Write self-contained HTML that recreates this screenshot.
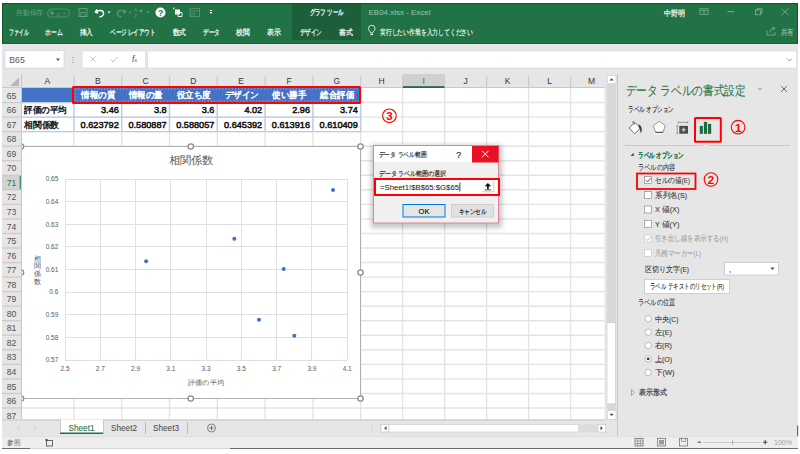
<!DOCTYPE html><html lang="ja"><head><meta charset="utf-8"><style>
html,body{margin:0;padding:0;background:#fff;width:800px;height:454px;overflow:hidden}
svg{display:block;font-family:"Liberation Sans", sans-serif}
</style></head><body>
<svg width="800" height="454" viewBox="0 0 800 454">
<rect x="2" y="3" width="796" height="445" fill="#e6e6e6"/>
<rect x="2" y="3" width="796" height="41" fill="#217346"/>
<rect x="2" y="3" width="796" height="1" fill="#0e5a2c"/>
<rect x="2" y="43" width="796" height="1" fill="#12683a"/>
<rect x="2" y="3" width="1" height="41" fill="#0e5a2c"/>
<rect x="797" y="3" width="1" height="41" fill="#0e5a2c"/>
<rect x="292" y="4" width="69" height="36" fill="#1d5f3a"/>
<text x="16" y="14.8" font-size="7" fill="#6aa583" text-anchor="start" font-weight="normal" textLength="27" lengthAdjust="spacingAndGlyphs" >自動保存</text>
<rect x="47.5" y="9" width="22" height="8" rx="4" fill="none" stroke="#5f9a77" stroke-width="0.8"/>
<circle cx="52" cy="13" r="1.8" fill="#5f9a77"/>
<text x="56" y="15.5" font-size="5" fill="#5f9a77" text-anchor="start" font-weight="normal" textLength="10" lengthAdjust="spacingAndGlyphs" >オフ</text>
<rect x="79" y="8.5" width="8" height="8" fill="none" stroke="#6aa07f" stroke-width="0.9"/>
<rect x="81" y="12.5" width="4" height="4" fill="none" stroke="#6aa07f" stroke-width="0.8"/>
<path d="M97 9.5 L95.5 12 L98 13.2 M95.8 12 C99 9.5 104 10 103.5 14 C103.2 16 101 17 99.5 16.5" fill="none" stroke="#fff" stroke-width="1.5"/>
<path d="M107.5 11.5 h3 l-1.5 2z" fill="#fff"/>
<path d="M124 9.5 L125.5 12 L123 13.2 M125.2 12 C122 9.5 117 10 117.5 14 C117.8 16 120 17 121.5 16.5" fill="none" stroke="#5f9a77" stroke-width="1.2"/>
<path d="M129 11.5 h3 l-1.5 2z" fill="#5f9a77"/>
<text x="134" y="12" font-size="5" fill="#5f9a77" text-anchor="start" font-weight="normal" >A</text>
<text x="134" y="17.5" font-size="5" fill="#5f9a77" text-anchor="start" font-weight="normal" >Z</text>
<path d="M139 10 h4 l-2 3z M139 12.5 v0" fill="#5f9a77"/>
<path d="M146.5 11.5 h3 l-1.5 2z" fill="#5f9a77"/>
<circle cx="160.5" cy="12.5" r="5" fill="#fff"/>
<text x="160.5" y="15.8" font-size="8.5" fill="#217346" text-anchor="middle" font-weight="bold" >?</text>
<path d="M173.5 9.5 v-1.5 h1.5" fill="none" stroke="#fff" stroke-width="0.7"/>
<rect x="175" y="9.5" width="5" height="5" fill="#fff"/>
<path d="M179.5 12.5 h2.5 v4 h-4 v-2" fill="none" stroke="#fff" stroke-width="0.9"/>
<rect x="190" y="8.5" width="9.5" height="8" fill="none" stroke="#5f9a77" stroke-width="0.8"/>
<path d="M190 10.8 h9.5 M190 13 h4 M190 15 h4 M194.5 10.8 v5.7" stroke="#5f9a77" stroke-width="0.6"/>
<rect x="210" y="10" width="2" height="1" fill="#fff"/>
<path d="M209.5 12 h3 l-1.5 2z" fill="#fff"/>
<text x="326.5" y="15" font-size="7.5" fill="#ffffff" text-anchor="middle" font-weight="normal" textLength="34" lengthAdjust="spacingAndGlyphs" stroke="#ffffff" stroke-width="0.3" >グラフ ツール</text>
<text x="368.5" y="15" font-size="7.5" fill="#9fc2ad" text-anchor="start" font-weight="normal" textLength="62" lengthAdjust="spacingAndGlyphs" >EB04.xlsx  -  Excel</text>
<text x="674.5" y="15.5" font-size="7.5" fill="#f0f5f1" text-anchor="middle" font-weight="normal" textLength="21" lengthAdjust="spacingAndGlyphs" stroke="#f0f5f1" stroke-width="0.25" >中野明</text>
<rect x="700" y="8.8" width="8" height="5.8" fill="none" stroke="#8fb9a0" stroke-width="0.7"/>
<path d="M700 10.3 h8 M704 13.8 v-2.6 M702.8 12.3 l1.2 -1.2 l1.2 1.2" fill="none" stroke="#8fb9a0" stroke-width="0.6"/>
<rect x="727.5" y="11.3" width="6.5" height="0.8" fill="#8fb9a0"/>
<rect x="755.5" y="10" width="5" height="4.8" fill="none" stroke="#8fb9a0" stroke-width="0.7"/>
<path d="M757 10 v-1.3 h5 v4.8 h-1.5" fill="none" stroke="#8fb9a0" stroke-width="0.7"/>
<path d="M781.5 8.5 l7 6.5 M788.5 8.5 l-7 6.5" stroke="#8fb9a0" stroke-width="0.7"/>
<text x="9" y="34.5" font-size="7.5" fill="#ffffff" text-anchor="start" font-weight="normal" textLength="19.5" lengthAdjust="spacingAndGlyphs" stroke="#ffffff" stroke-width="0.2" >ファイル</text>
<text x="45" y="34.5" font-size="7.5" fill="#ffffff" text-anchor="start" font-weight="normal" textLength="17.5" lengthAdjust="spacingAndGlyphs" stroke="#ffffff" stroke-width="0.2" >ホーム</text>
<text x="79.5" y="34.5" font-size="7.5" fill="#ffffff" text-anchor="start" font-weight="normal" textLength="13.5" lengthAdjust="spacingAndGlyphs" stroke="#ffffff" stroke-width="0.2" >挿入</text>
<text x="110" y="34.5" font-size="7.5" fill="#ffffff" text-anchor="start" font-weight="normal" textLength="45.5" lengthAdjust="spacingAndGlyphs" stroke="#ffffff" stroke-width="0.2" >ページ レイアウト</text>
<text x="172.5" y="34.5" font-size="7.5" fill="#ffffff" text-anchor="start" font-weight="normal" textLength="13.5" lengthAdjust="spacingAndGlyphs" stroke="#ffffff" stroke-width="0.2" >数式</text>
<text x="203" y="34.5" font-size="7.5" fill="#ffffff" text-anchor="start" font-weight="normal" textLength="17" lengthAdjust="spacingAndGlyphs" stroke="#ffffff" stroke-width="0.2" >データ</text>
<text x="236" y="34.5" font-size="7.5" fill="#ffffff" text-anchor="start" font-weight="normal" textLength="13.5" lengthAdjust="spacingAndGlyphs" stroke="#ffffff" stroke-width="0.2" >校閲</text>
<text x="267" y="34.5" font-size="7.5" fill="#ffffff" text-anchor="start" font-weight="normal" textLength="14" lengthAdjust="spacingAndGlyphs" stroke="#ffffff" stroke-width="0.2" >表示</text>
<text x="299.5" y="34.5" font-size="7.5" fill="#ffffff" text-anchor="start" font-weight="normal" textLength="22.5" lengthAdjust="spacingAndGlyphs" stroke="#ffffff" stroke-width="0.2" >デザイン</text>
<text x="338.8" y="34.5" font-size="7.5" fill="#ffffff" text-anchor="start" font-weight="normal" textLength="13.7" lengthAdjust="spacingAndGlyphs" stroke="#ffffff" stroke-width="0.2" >書式</text>
<path d="M370.5 33 v-1 q-2 -1.5 -2 -3.5 a3.2 3.2 0 0 1 6.5 0 q0 2 -2 3.5 v1z" fill="none" stroke="#fff" stroke-width="0.8"/>
<rect x="370.5" y="34" width="2.5" height="1" fill="#fff"/>
<text x="380" y="34.5" font-size="7.5" fill="#ffffff" text-anchor="start" font-weight="normal" textLength="93" lengthAdjust="spacingAndGlyphs" stroke="#ffffff" stroke-width="0.12" >実行したい作業を入力してください</text>
<path d="M767 30.5 v4.5 h8 v-3 M769.5 32.5 q1 -4 5 -4.5 M772.5 26.8 l2.2 1.6 l-1.8 1.8" fill="none" stroke="#8fb9a0" stroke-width="0.7"/>
<text x="780.5" y="34.5" font-size="7.5" fill="#a3c5b0" text-anchor="start" font-weight="normal" textLength="13" lengthAdjust="spacingAndGlyphs" stroke="#a3c5b0" stroke-width="0.1" >共有</text>
<rect x="5" y="50.5" width="59" height="17.5" fill="#fff" stroke="#d0d0d0" stroke-width="0.6"/>
<text x="9.3" y="62.8" font-size="9" fill="#5a5a5a" text-anchor="start" font-weight="normal" textLength="15.5" lengthAdjust="spacingAndGlyphs" >B65</text>
<path d="M56 58.5 h4 l-2 2.5z" fill="#555"/>
<rect x="72.5" y="57" width="1" height="1" fill="#999"/>
<rect x="72.5" y="59.5" width="1" height="1" fill="#999"/>
<rect x="72.5" y="62" width="1" height="1" fill="#999"/>
<rect x="82" y="51" width="63.5" height="17" fill="#fff" stroke="#d6d6d6" stroke-width="0.6"/>
<path d="M90.5 56.5 l5 5 M95.5 56.5 l-5 5" stroke="#b0b0b0" stroke-width="0.8"/>
<path d="M111 59.5 l2 2.5 l4.5 -5" fill="none" stroke="#b0b0b0" stroke-width="0.8"/>
<text x="134.5" y="62" font-size="8.5" fill="#444" text-anchor="middle" font-weight="normal" ><tspan font-style="italic">f</tspan><tspan font-size="5">x</tspan></text>
<rect x="147.5" y="51" width="649" height="17" fill="#fff" stroke="#d6d6d6" stroke-width="0.6"/>
<path d="M787 58.5 l2.5 2.5 l2.5 -2.5" fill="none" stroke="#777" stroke-width="0.8"/>
<rect x="21" y="88" width="583.5" height="332" fill="#fff"/>
<rect x="2" y="74" width="602.5" height="14" fill="#e6e6e6"/>
<rect x="403" y="74" width="41.5" height="14" fill="#d0d0d0"/>
<line x1="21" y1="102.55" x2="604.5" y2="102.55" stroke="#e4e4e4" stroke-width="1.4"/>
<line x1="21" y1="117.09" x2="604.5" y2="117.09" stroke="#e4e4e4" stroke-width="1.4"/>
<line x1="21" y1="131.63" x2="604.5" y2="131.63" stroke="#e4e4e4" stroke-width="1.4"/>
<line x1="21" y1="146.18" x2="604.5" y2="146.18" stroke="#e4e4e4" stroke-width="1.4"/>
<line x1="21" y1="160.72" x2="604.5" y2="160.72" stroke="#e4e4e4" stroke-width="1.4"/>
<line x1="21" y1="175.27" x2="604.5" y2="175.27" stroke="#e4e4e4" stroke-width="1.4"/>
<line x1="21" y1="189.81" x2="604.5" y2="189.81" stroke="#e4e4e4" stroke-width="1.4"/>
<line x1="21" y1="204.36" x2="604.5" y2="204.36" stroke="#e4e4e4" stroke-width="1.4"/>
<line x1="21" y1="218.91" x2="604.5" y2="218.91" stroke="#e4e4e4" stroke-width="1.4"/>
<line x1="21" y1="233.45" x2="604.5" y2="233.45" stroke="#e4e4e4" stroke-width="1.4"/>
<line x1="21" y1="248.00" x2="604.5" y2="248.00" stroke="#e4e4e4" stroke-width="1.4"/>
<line x1="21" y1="262.54" x2="604.5" y2="262.54" stroke="#e4e4e4" stroke-width="1.4"/>
<line x1="21" y1="277.09" x2="604.5" y2="277.09" stroke="#e4e4e4" stroke-width="1.4"/>
<line x1="21" y1="291.63" x2="604.5" y2="291.63" stroke="#e4e4e4" stroke-width="1.4"/>
<line x1="21" y1="306.18" x2="604.5" y2="306.18" stroke="#e4e4e4" stroke-width="1.4"/>
<line x1="21" y1="320.72" x2="604.5" y2="320.72" stroke="#e4e4e4" stroke-width="1.4"/>
<line x1="21" y1="335.26" x2="604.5" y2="335.26" stroke="#e4e4e4" stroke-width="1.4"/>
<line x1="21" y1="349.81" x2="604.5" y2="349.81" stroke="#e4e4e4" stroke-width="1.4"/>
<line x1="21" y1="364.36" x2="604.5" y2="364.36" stroke="#e4e4e4" stroke-width="1.4"/>
<line x1="21" y1="378.90" x2="604.5" y2="378.90" stroke="#e4e4e4" stroke-width="1.4"/>
<line x1="21" y1="393.44" x2="604.5" y2="393.44" stroke="#e4e4e4" stroke-width="1.4"/>
<line x1="21" y1="407.99" x2="604.5" y2="407.99" stroke="#e4e4e4" stroke-width="1.4"/>
<line x1="73.9" y1="88" x2="73.9" y2="420" stroke="#e4e4e4" stroke-width="1.4"/>
<line x1="73.9" y1="76" x2="73.9" y2="88" stroke="#cacaca" stroke-width="1.2"/>
<line x1="121.7" y1="88" x2="121.7" y2="420" stroke="#e4e4e4" stroke-width="1.4"/>
<line x1="121.7" y1="76" x2="121.7" y2="88" stroke="#cacaca" stroke-width="1.2"/>
<line x1="169.5" y1="88" x2="169.5" y2="420" stroke="#e4e4e4" stroke-width="1.4"/>
<line x1="169.5" y1="76" x2="169.5" y2="88" stroke="#cacaca" stroke-width="1.2"/>
<line x1="217.3" y1="88" x2="217.3" y2="420" stroke="#e4e4e4" stroke-width="1.4"/>
<line x1="217.3" y1="76" x2="217.3" y2="88" stroke="#cacaca" stroke-width="1.2"/>
<line x1="265.1" y1="88" x2="265.1" y2="420" stroke="#e4e4e4" stroke-width="1.4"/>
<line x1="265.1" y1="76" x2="265.1" y2="88" stroke="#cacaca" stroke-width="1.2"/>
<line x1="312.9" y1="88" x2="312.9" y2="420" stroke="#e4e4e4" stroke-width="1.4"/>
<line x1="312.9" y1="76" x2="312.9" y2="88" stroke="#cacaca" stroke-width="1.2"/>
<line x1="360.7" y1="88" x2="360.7" y2="420" stroke="#e4e4e4" stroke-width="1.4"/>
<line x1="360.7" y1="76" x2="360.7" y2="88" stroke="#cacaca" stroke-width="1.2"/>
<line x1="402.6" y1="88" x2="402.6" y2="420" stroke="#e4e4e4" stroke-width="1.4"/>
<line x1="402.6" y1="76" x2="402.6" y2="88" stroke="#cacaca" stroke-width="1.2"/>
<line x1="444.6" y1="88" x2="444.6" y2="420" stroke="#e4e4e4" stroke-width="1.4"/>
<line x1="444.6" y1="76" x2="444.6" y2="88" stroke="#cacaca" stroke-width="1.2"/>
<line x1="486.6" y1="88" x2="486.6" y2="420" stroke="#e4e4e4" stroke-width="1.4"/>
<line x1="486.6" y1="76" x2="486.6" y2="88" stroke="#cacaca" stroke-width="1.2"/>
<line x1="528.6" y1="88" x2="528.6" y2="420" stroke="#e4e4e4" stroke-width="1.4"/>
<line x1="528.6" y1="76" x2="528.6" y2="88" stroke="#cacaca" stroke-width="1.2"/>
<line x1="570.6" y1="88" x2="570.6" y2="420" stroke="#e4e4e4" stroke-width="1.4"/>
<line x1="570.6" y1="76" x2="570.6" y2="88" stroke="#cacaca" stroke-width="1.2"/>
<line x1="2" y1="87.5" x2="604.5" y2="87.5" stroke="#c8c8c8" stroke-width="1"/>
<rect x="403" y="86.2" width="41.5" height="1.8" fill="#1e6b40"/>
<path d="M19 77.5 L19 86 L10 86 Z" fill="#b8b8b8"/>
<text x="47.45" y="84" font-size="8.5" fill="#333" text-anchor="middle" font-weight="normal" >A</text>
<text x="97.80000000000001" y="84" font-size="8.5" fill="#333" text-anchor="middle" font-weight="normal" >B</text>
<text x="145.6" y="84" font-size="8.5" fill="#333" text-anchor="middle" font-weight="normal" >C</text>
<text x="193.4" y="84" font-size="8.5" fill="#333" text-anchor="middle" font-weight="normal" >D</text>
<text x="241.20000000000002" y="84" font-size="8.5" fill="#333" text-anchor="middle" font-weight="normal" >E</text>
<text x="289.0" y="84" font-size="8.5" fill="#333" text-anchor="middle" font-weight="normal" >F</text>
<text x="336.79999999999995" y="84" font-size="8.5" fill="#333" text-anchor="middle" font-weight="normal" >G</text>
<text x="381.65" y="84" font-size="8.5" fill="#333" text-anchor="middle" font-weight="normal" >H</text>
<text x="423.6" y="84" font-size="8.5" fill="#217346" text-anchor="middle" font-weight="normal" >I</text>
<text x="465.6" y="84" font-size="8.5" fill="#333" text-anchor="middle" font-weight="normal" >J</text>
<text x="507.6" y="84" font-size="8.5" fill="#333" text-anchor="middle" font-weight="normal" >K</text>
<text x="549.6" y="84" font-size="8.5" fill="#333" text-anchor="middle" font-weight="normal" >L</text>
<text x="591.6" y="84" font-size="8.5" fill="#333" text-anchor="middle" font-weight="normal" >M</text>
<rect x="21.5" y="88" width="339.2" height="14.545" fill="#4472c4"/>
<line x1="21.5" y1="102.55" x2="360.7" y2="102.55" stroke="#bccbea" stroke-width="1.3"/>
<line x1="21.5" y1="117.09" x2="360.7" y2="117.09" stroke="#bccbea" stroke-width="1.3"/>
<line x1="21.5" y1="131.63" x2="360.7" y2="131.63" stroke="#bccbea" stroke-width="1.3"/>
<line x1="73.9" y1="102.545" x2="73.9" y2="131.635" stroke="#bccbea" stroke-width="1.3"/>
<line x1="121.7" y1="102.545" x2="121.7" y2="131.635" stroke="#bccbea" stroke-width="1.3"/>
<line x1="169.5" y1="102.545" x2="169.5" y2="131.635" stroke="#bccbea" stroke-width="1.3"/>
<line x1="217.3" y1="102.545" x2="217.3" y2="131.635" stroke="#bccbea" stroke-width="1.3"/>
<line x1="265.1" y1="102.545" x2="265.1" y2="131.635" stroke="#bccbea" stroke-width="1.3"/>
<line x1="312.9" y1="102.545" x2="312.9" y2="131.635" stroke="#bccbea" stroke-width="1.3"/>
<line x1="360.7" y1="102.545" x2="360.7" y2="131.635" stroke="#bccbea" stroke-width="1.3"/>
<text x="98.10000000000001" y="98.3" font-size="8.5" fill="#fff" text-anchor="middle" font-weight="normal" textLength="34" lengthAdjust="spacingAndGlyphs" stroke="#fff" stroke-width="0.5" >情報の質</text>
<text x="145.9" y="98.3" font-size="8.5" fill="#fff" text-anchor="middle" font-weight="normal" textLength="34" lengthAdjust="spacingAndGlyphs" stroke="#fff" stroke-width="0.5" >情報の量</text>
<text x="193.70000000000002" y="98.3" font-size="8.5" fill="#fff" text-anchor="middle" font-weight="normal" textLength="34" lengthAdjust="spacingAndGlyphs" stroke="#fff" stroke-width="0.5" >役立ち度</text>
<text x="241.50000000000003" y="98.3" font-size="8.5" fill="#fff" text-anchor="middle" font-weight="normal" textLength="34" lengthAdjust="spacingAndGlyphs" stroke="#fff" stroke-width="0.5" >デザイン</text>
<text x="289.3" y="98.3" font-size="8.5" fill="#fff" text-anchor="middle" font-weight="normal" textLength="34" lengthAdjust="spacingAndGlyphs" stroke="#fff" stroke-width="0.5" >使い勝手</text>
<text x="337.09999999999997" y="98.3" font-size="8.5" fill="#fff" text-anchor="middle" font-weight="normal" textLength="34" lengthAdjust="spacingAndGlyphs" stroke="#fff" stroke-width="0.5" >総合評価</text>
<text x="118.8" y="113.345" font-size="9.4" fill="#111" text-anchor="end" font-weight="normal" textLength="17.75" lengthAdjust="spacingAndGlyphs" stroke="#111" stroke-width="0.5" >3.46</text>
<text x="118.8" y="127.89" font-size="9.4" fill="#111" text-anchor="end" font-weight="normal" textLength="38.19" lengthAdjust="spacingAndGlyphs" stroke="#111" stroke-width="0.5" >0.623792</text>
<text x="166.6" y="113.345" font-size="9.4" fill="#111" text-anchor="end" font-weight="normal" textLength="12.64" lengthAdjust="spacingAndGlyphs" stroke="#111" stroke-width="0.5" >3.8</text>
<text x="166.6" y="127.89" font-size="9.4" fill="#111" text-anchor="end" font-weight="normal" textLength="38.19" lengthAdjust="spacingAndGlyphs" stroke="#111" stroke-width="0.5" >0.580887</text>
<text x="214.4" y="113.345" font-size="9.4" fill="#111" text-anchor="end" font-weight="normal" textLength="12.64" lengthAdjust="spacingAndGlyphs" stroke="#111" stroke-width="0.5" >3.6</text>
<text x="214.4" y="127.89" font-size="9.4" fill="#111" text-anchor="end" font-weight="normal" textLength="38.19" lengthAdjust="spacingAndGlyphs" stroke="#111" stroke-width="0.5" >0.588057</text>
<text x="262.20000000000005" y="113.345" font-size="9.4" fill="#111" text-anchor="end" font-weight="normal" textLength="17.75" lengthAdjust="spacingAndGlyphs" stroke="#111" stroke-width="0.5" >4.02</text>
<text x="262.20000000000005" y="127.89" font-size="9.4" fill="#111" text-anchor="end" font-weight="normal" textLength="38.19" lengthAdjust="spacingAndGlyphs" stroke="#111" stroke-width="0.5" >0.645392</text>
<text x="310.0" y="113.345" font-size="9.4" fill="#111" text-anchor="end" font-weight="normal" textLength="17.75" lengthAdjust="spacingAndGlyphs" stroke="#111" stroke-width="0.5" >2.96</text>
<text x="310.0" y="127.89" font-size="9.4" fill="#111" text-anchor="end" font-weight="normal" textLength="38.19" lengthAdjust="spacingAndGlyphs" stroke="#111" stroke-width="0.5" >0.613916</text>
<text x="357.8" y="113.345" font-size="9.4" fill="#111" text-anchor="end" font-weight="normal" textLength="17.75" lengthAdjust="spacingAndGlyphs" stroke="#111" stroke-width="0.5" >3.74</text>
<text x="357.8" y="127.89" font-size="9.4" fill="#111" text-anchor="end" font-weight="normal" textLength="38.19" lengthAdjust="spacingAndGlyphs" stroke="#111" stroke-width="0.5" >0.610409</text>
<text x="24" y="113.045" font-size="8.5" fill="#111" text-anchor="start" font-weight="normal" textLength="43" lengthAdjust="spacingAndGlyphs" stroke="#111" stroke-width="0.4" >評価の平均</text>
<text x="24" y="127.59" font-size="8.5" fill="#111" text-anchor="start" font-weight="normal" textLength="35" lengthAdjust="spacingAndGlyphs" stroke="#111" stroke-width="0.4" >相関係数</text>
<rect x="75" y="89" width="285" height="12.045" fill="none" stroke="#fff" stroke-width="0.7" stroke-dasharray="1.2 2" opacity="0.6"/>
<rect x="73" y="87" width="287" height="16" rx="0.5" fill="none" stroke="#ff0000" stroke-width="2"/>
<circle cx="389.4" cy="115.8" r="6.8" fill="none" stroke="#ff0000" stroke-width="1.1"/>
<text x="389.4" y="120.1" font-size="11.5" fill="#ff0000" text-anchor="middle" font-weight="bold" >3</text>
<rect x="21" y="146.5" width="339.5" height="252.0" fill="#fff" stroke="#b0b0b0" stroke-width="1"/>
<line x1="65.5" y1="179" x2="65.5" y2="360" stroke="#e0e0e0" stroke-width="1"/>
<text x="65.0" y="371" font-size="6.5" fill="#595959" text-anchor="middle" font-weight="normal" >2.5</text>
<line x1="100.5" y1="179" x2="100.5" y2="360" stroke="#e0e0e0" stroke-width="1"/>
<text x="100.275" y="371" font-size="6.5" fill="#595959" text-anchor="middle" font-weight="normal" >2.7</text>
<line x1="135.5" y1="179" x2="135.5" y2="360" stroke="#e0e0e0" stroke-width="1"/>
<text x="135.55" y="371" font-size="6.5" fill="#595959" text-anchor="middle" font-weight="normal" >2.9</text>
<line x1="170.5" y1="179" x2="170.5" y2="360" stroke="#e0e0e0" stroke-width="1"/>
<text x="170.825" y="371" font-size="6.5" fill="#595959" text-anchor="middle" font-weight="normal" >3.1</text>
<line x1="206.5" y1="179" x2="206.5" y2="360" stroke="#e0e0e0" stroke-width="1"/>
<text x="206.1" y="371" font-size="6.5" fill="#595959" text-anchor="middle" font-weight="normal" >3.3</text>
<line x1="241.5" y1="179" x2="241.5" y2="360" stroke="#e0e0e0" stroke-width="1"/>
<text x="241.375" y="371" font-size="6.5" fill="#595959" text-anchor="middle" font-weight="normal" >3.5</text>
<line x1="276.5" y1="179" x2="276.5" y2="360" stroke="#e0e0e0" stroke-width="1"/>
<text x="276.65" y="371" font-size="6.5" fill="#595959" text-anchor="middle" font-weight="normal" >3.7</text>
<line x1="311.5" y1="179" x2="311.5" y2="360" stroke="#e0e0e0" stroke-width="1"/>
<text x="311.92499999999995" y="371" font-size="6.5" fill="#595959" text-anchor="middle" font-weight="normal" >3.9</text>
<line x1="347.5" y1="179" x2="347.5" y2="360" stroke="#e0e0e0" stroke-width="1"/>
<text x="347.2" y="371" font-size="6.5" fill="#595959" text-anchor="middle" font-weight="normal" >4.1</text>
<line x1="65" y1="179.5" x2="347.2" y2="179.5" stroke="#e0e0e0" stroke-width="1"/>
<text x="58.3" y="181.3" font-size="6.5" fill="#595959" text-anchor="end" font-weight="normal" >0.65</text>
<line x1="65" y1="201.5" x2="347.2" y2="201.5" stroke="#e0e0e0" stroke-width="1"/>
<text x="58.3" y="203.925" font-size="6.5" fill="#595959" text-anchor="end" font-weight="normal" >0.64</text>
<line x1="65" y1="224.5" x2="347.2" y2="224.5" stroke="#e0e0e0" stroke-width="1"/>
<text x="58.3" y="226.55" font-size="6.5" fill="#595959" text-anchor="end" font-weight="normal" >0.63</text>
<line x1="65" y1="246.5" x2="347.2" y2="246.5" stroke="#e0e0e0" stroke-width="1"/>
<text x="58.3" y="249.175" font-size="6.5" fill="#595959" text-anchor="end" font-weight="normal" >0.62</text>
<line x1="65" y1="269.5" x2="347.2" y2="269.5" stroke="#e0e0e0" stroke-width="1"/>
<text x="58.3" y="271.8" font-size="6.5" fill="#595959" text-anchor="end" font-weight="normal" >0.61</text>
<line x1="65" y1="292.5" x2="347.2" y2="292.5" stroke="#e0e0e0" stroke-width="1"/>
<text x="58.3" y="294.425" font-size="6.5" fill="#595959" text-anchor="end" font-weight="normal" >0.6</text>
<line x1="65" y1="314.5" x2="347.2" y2="314.5" stroke="#e0e0e0" stroke-width="1"/>
<text x="58.3" y="317.05" font-size="6.5" fill="#595959" text-anchor="end" font-weight="normal" >0.59</text>
<line x1="65" y1="337.5" x2="347.2" y2="337.5" stroke="#e0e0e0" stroke-width="1"/>
<text x="58.3" y="339.675" font-size="6.5" fill="#595959" text-anchor="end" font-weight="normal" >0.58</text>
<line x1="65" y1="360.5" x2="347.2" y2="360.5" stroke="#e0e0e0" stroke-width="1"/>
<text x="58.3" y="362.3" font-size="6.5" fill="#595959" text-anchor="end" font-weight="normal" >0.57</text>
<text x="191" y="163.5" font-size="10.5" fill="#595959" text-anchor="middle" font-weight="normal" textLength="45" lengthAdjust="spacingAndGlyphs" >相関係数</text>
<text x="206" y="384.6" font-size="7.2" fill="#595959" text-anchor="middle" font-weight="normal" textLength="36" lengthAdjust="spacingAndGlyphs" >評価の平均</text>
<text x="37.7" y="260.5" font-size="7" fill="#595959" text-anchor="middle" font-weight="normal" >相</text>
<text x="37.7" y="268.3" font-size="7" fill="#595959" text-anchor="middle" font-weight="normal" >関</text>
<text x="37.7" y="276.1" font-size="7" fill="#595959" text-anchor="middle" font-weight="normal" >係</text>
<text x="37.7" y="283.9" font-size="7" fill="#595959" text-anchor="middle" font-weight="normal" >数</text>
<circle cx="234.32" cy="238.80" r="2" fill="#3f6fc6"/>
<circle cx="294.29" cy="335.87" r="2" fill="#3f6fc6"/>
<circle cx="259.01" cy="319.65" r="2" fill="#3f6fc6"/>
<circle cx="333.09" cy="189.93" r="2" fill="#3f6fc6"/>
<circle cx="146.13" cy="261.14" r="2" fill="#3f6fc6"/>
<circle cx="283.71" cy="269.07" r="2" fill="#3f6fc6"/>
<circle cx="21" cy="146.5" r="2.7" fill="#fff" stroke="#8a8a8a" stroke-width="1.25"/>
<circle cx="190.75" cy="146.5" r="2.7" fill="#fff" stroke="#8a8a8a" stroke-width="1.25"/>
<circle cx="360.5" cy="146.5" r="2.7" fill="#fff" stroke="#8a8a8a" stroke-width="1.25"/>
<circle cx="21" cy="272.5" r="2.7" fill="#fff" stroke="#8a8a8a" stroke-width="1.25"/>
<circle cx="360.5" cy="272.5" r="2.7" fill="#fff" stroke="#8a8a8a" stroke-width="1.25"/>
<circle cx="21" cy="398.5" r="2.7" fill="#fff" stroke="#8a8a8a" stroke-width="1.25"/>
<circle cx="190.75" cy="398.5" r="2.7" fill="#fff" stroke="#8a8a8a" stroke-width="1.25"/>
<circle cx="360.5" cy="398.5" r="2.7" fill="#fff" stroke="#8a8a8a" stroke-width="1.25"/>
<rect x="2" y="88" width="19.5" height="332" fill="#e6e6e6"/>
<rect x="2" y="175.26999999999998" width="19.5" height="14.545" fill="#d3d3d3"/>
<rect x="19.6" y="175.26999999999998" width="1.4" height="14.545" fill="#4a9a68"/>
<line x1="2" y1="102.55" x2="21" y2="102.55" stroke="#cacaca" stroke-width="1.2"/>
<line x1="2" y1="117.09" x2="21" y2="117.09" stroke="#cacaca" stroke-width="1.2"/>
<line x1="2" y1="131.63" x2="21" y2="131.63" stroke="#cacaca" stroke-width="1.2"/>
<line x1="2" y1="146.18" x2="21" y2="146.18" stroke="#cacaca" stroke-width="1.2"/>
<line x1="2" y1="160.72" x2="21" y2="160.72" stroke="#cacaca" stroke-width="1.2"/>
<line x1="2" y1="175.27" x2="21" y2="175.27" stroke="#cacaca" stroke-width="1.2"/>
<line x1="2" y1="189.81" x2="21" y2="189.81" stroke="#cacaca" stroke-width="1.2"/>
<line x1="2" y1="204.36" x2="21" y2="204.36" stroke="#cacaca" stroke-width="1.2"/>
<line x1="2" y1="218.91" x2="21" y2="218.91" stroke="#cacaca" stroke-width="1.2"/>
<line x1="2" y1="233.45" x2="21" y2="233.45" stroke="#cacaca" stroke-width="1.2"/>
<line x1="2" y1="248.00" x2="21" y2="248.00" stroke="#cacaca" stroke-width="1.2"/>
<line x1="2" y1="262.54" x2="21" y2="262.54" stroke="#cacaca" stroke-width="1.2"/>
<line x1="2" y1="277.09" x2="21" y2="277.09" stroke="#cacaca" stroke-width="1.2"/>
<line x1="2" y1="291.63" x2="21" y2="291.63" stroke="#cacaca" stroke-width="1.2"/>
<line x1="2" y1="306.18" x2="21" y2="306.18" stroke="#cacaca" stroke-width="1.2"/>
<line x1="2" y1="320.72" x2="21" y2="320.72" stroke="#cacaca" stroke-width="1.2"/>
<line x1="2" y1="335.26" x2="21" y2="335.26" stroke="#cacaca" stroke-width="1.2"/>
<line x1="2" y1="349.81" x2="21" y2="349.81" stroke="#cacaca" stroke-width="1.2"/>
<line x1="2" y1="364.36" x2="21" y2="364.36" stroke="#cacaca" stroke-width="1.2"/>
<line x1="2" y1="378.90" x2="21" y2="378.90" stroke="#cacaca" stroke-width="1.2"/>
<line x1="2" y1="393.44" x2="21" y2="393.44" stroke="#cacaca" stroke-width="1.2"/>
<line x1="2" y1="407.99" x2="21" y2="407.99" stroke="#cacaca" stroke-width="1.2"/>
<line x1="21.5" y1="74" x2="21.5" y2="420" stroke="#c8c8c8" stroke-width="1"/>
<text x="11.6" y="98.6725" font-size="9.4" fill="#505050" text-anchor="middle" font-weight="normal" textLength="9.6" lengthAdjust="spacingAndGlyphs" >65</text>
<text x="11.6" y="113.2175" font-size="9.4" fill="#505050" text-anchor="middle" font-weight="normal" textLength="9.6" lengthAdjust="spacingAndGlyphs" >66</text>
<text x="11.6" y="127.7625" font-size="9.4" fill="#505050" text-anchor="middle" font-weight="normal" textLength="9.6" lengthAdjust="spacingAndGlyphs" >67</text>
<text x="11.6" y="142.3075" font-size="9.4" fill="#505050" text-anchor="middle" font-weight="normal" textLength="9.6" lengthAdjust="spacingAndGlyphs" >68</text>
<text x="11.6" y="156.85250000000002" font-size="9.4" fill="#505050" text-anchor="middle" font-weight="normal" textLength="9.6" lengthAdjust="spacingAndGlyphs" >69</text>
<text x="11.6" y="171.3975" font-size="9.4" fill="#505050" text-anchor="middle" font-weight="normal" textLength="9.6" lengthAdjust="spacingAndGlyphs" >70</text>
<text x="11.6" y="185.9425" font-size="9.4" fill="#217346" text-anchor="middle" font-weight="normal" textLength="9.6" lengthAdjust="spacingAndGlyphs" >71</text>
<text x="11.6" y="200.4875" font-size="9.4" fill="#505050" text-anchor="middle" font-weight="normal" textLength="9.6" lengthAdjust="spacingAndGlyphs" >72</text>
<text x="11.6" y="215.03250000000003" font-size="9.4" fill="#505050" text-anchor="middle" font-weight="normal" textLength="9.6" lengthAdjust="spacingAndGlyphs" >73</text>
<text x="11.6" y="229.57750000000001" font-size="9.4" fill="#505050" text-anchor="middle" font-weight="normal" textLength="9.6" lengthAdjust="spacingAndGlyphs" >74</text>
<text x="11.6" y="244.1225" font-size="9.4" fill="#505050" text-anchor="middle" font-weight="normal" textLength="9.6" lengthAdjust="spacingAndGlyphs" >75</text>
<text x="11.6" y="258.6675" font-size="9.4" fill="#505050" text-anchor="middle" font-weight="normal" textLength="9.6" lengthAdjust="spacingAndGlyphs" >76</text>
<text x="11.6" y="273.2124999999999" font-size="9.4" fill="#505050" text-anchor="middle" font-weight="normal" textLength="9.6" lengthAdjust="spacingAndGlyphs" >77</text>
<text x="11.6" y="287.7575" font-size="9.4" fill="#505050" text-anchor="middle" font-weight="normal" textLength="9.6" lengthAdjust="spacingAndGlyphs" >78</text>
<text x="11.6" y="302.30249999999995" font-size="9.4" fill="#505050" text-anchor="middle" font-weight="normal" textLength="9.6" lengthAdjust="spacingAndGlyphs" >79</text>
<text x="11.6" y="316.84749999999997" font-size="9.4" fill="#505050" text-anchor="middle" font-weight="normal" textLength="9.6" lengthAdjust="spacingAndGlyphs" >80</text>
<text x="11.6" y="331.3925" font-size="9.4" fill="#505050" text-anchor="middle" font-weight="normal" textLength="9.6" lengthAdjust="spacingAndGlyphs" >81</text>
<text x="11.6" y="345.93749999999994" font-size="9.4" fill="#505050" text-anchor="middle" font-weight="normal" textLength="9.6" lengthAdjust="spacingAndGlyphs" >82</text>
<text x="11.6" y="360.48249999999996" font-size="9.4" fill="#505050" text-anchor="middle" font-weight="normal" textLength="9.6" lengthAdjust="spacingAndGlyphs" >83</text>
<text x="11.6" y="375.0275" font-size="9.4" fill="#505050" text-anchor="middle" font-weight="normal" textLength="9.6" lengthAdjust="spacingAndGlyphs" >84</text>
<text x="11.6" y="389.57249999999993" font-size="9.4" fill="#505050" text-anchor="middle" font-weight="normal" textLength="9.6" lengthAdjust="spacingAndGlyphs" >85</text>
<text x="11.6" y="404.11749999999995" font-size="9.4" fill="#505050" text-anchor="middle" font-weight="normal" textLength="9.6" lengthAdjust="spacingAndGlyphs" >86</text>
<text x="11.6" y="418.66249999999997" font-size="9.4" fill="#505050" text-anchor="middle" font-weight="normal" textLength="9.6" lengthAdjust="spacingAndGlyphs" >87</text>
<defs><filter id="sh" x="-20%" y="-20%" width="140%" height="140%"><feGaussianBlur stdDeviation="2.5"/></filter></defs>
<rect x="371" y="145" width="131" height="83" fill="#000" opacity="0.22" filter="url(#sh)"/>
<rect x="373.5" y="145.5" width="125" height="77.5" fill="#f0f0f0" stroke="#e3809b" stroke-width="1"/>
<rect x="374" y="146" width="124" height="16" fill="#fff"/>
<rect x="472" y="146" width="26.5" height="16.5" fill="#e81123"/>
<path d="M482 150.8 l6.5 6.5 M488.5 150.8 l-6.5 6.5" stroke="#fff" stroke-width="1"/>
<text x="378.5" y="157" font-size="7" fill="#222" text-anchor="start" font-weight="normal" textLength="48" lengthAdjust="spacingAndGlyphs" stroke="#222" stroke-width="0.15" >データ ラベル範囲</text>
<text x="458.5" y="157.8" font-size="8.5" fill="#222" text-anchor="middle" font-weight="normal" stroke="#222" stroke-width="0.2" >?</text>
<text x="378.5" y="175.5" font-size="7" fill="#222" text-anchor="start" font-weight="normal" textLength="68" lengthAdjust="spacingAndGlyphs" stroke="#222" stroke-width="0.15" >データ ラベル範囲の選択</text>
<rect x="376" y="180" width="122" height="14" fill="#fff"/>
<text x="380" y="190" font-size="7.5" fill="#111" text-anchor="start" font-weight="normal" textLength="79" lengthAdjust="spacingAndGlyphs" >=Sheet1!$B$65:$G$65</text>
<rect x="459.5" y="182.5" width="0.8" height="9" fill="#111"/>
<rect x="482.2" y="180.3" width="11.7" height="11.5" fill="#fdfdfd"/>
<path d="M482.2 191.8 h11.7 v-11.5" fill="none" stroke="#c0c0c0" stroke-width="0.8"/>
<path d="M484.6 186.3 l3.3 -3.4 l3.3 3.4z M487 186.2 h1.8 v2.8 h-1.8z M484.8 189.6 h6.3 v0.7 h-6.3z" fill="#111"/>
<rect x="375" y="179" width="124" height="16" fill="none" stroke="#ff0000" stroke-width="2"/>
<rect x="403" y="204.5" width="42" height="12.5" fill="#e5e5e5" stroke="#0078d7" stroke-width="1"/>
<text x="424" y="213.8" font-size="7.5" fill="#111" text-anchor="middle" font-weight="normal" stroke="#111" stroke-width="0.15" >OK</text>
<rect x="451.5" y="204.5" width="42" height="12.5" fill="#e1e1e1" stroke="#c8c8c8" stroke-width="0.8"/>
<text x="472.5" y="213.8" font-size="7" fill="#222" text-anchor="middle" font-weight="normal" textLength="28" lengthAdjust="spacingAndGlyphs" stroke="#222" stroke-width="0.2" >キャンセル</text>
<rect x="605" y="74" width="12" height="346" fill="#e6e6e6"/>
<rect x="607" y="84" width="9" height="326" fill="#d8d8d8"/>
<rect x="607.2" y="75.3" width="8.8" height="8.3" fill="#fff" stroke="#c6c6c6" stroke-width="0.6"/>
<path d="M609.5 80.5 h4.2 l-2.1 -2.2z" fill="#444"/>
<rect x="607" y="322.6" width="8.7" height="81.2" fill="#fff" stroke="#c8c8c8" stroke-width="0.6"/>
<rect x="607.2" y="410.8" width="8.8" height="8.5" fill="#fff" stroke="#c6c6c6" stroke-width="0.6"/>
<path d="M609.5 413.8 h4.2 l-2.1 2.2z" fill="#444"/>
<line x1="617.5" y1="74" x2="617.5" y2="436" stroke="#c6c6c6" stroke-width="1"/>
<rect x="618" y="74" width="180" height="362" fill="#e6e6e6"/>
<text x="625.5" y="95" font-size="12.5" fill="#217346" text-anchor="start" font-weight="normal" textLength="120" lengthAdjust="spacingAndGlyphs" stroke="#217346" stroke-width="0.08" >データ ラベルの書式設定</text>
<path d="M757.5 88 h5 l-2.5 2.5z" fill="#b0b0b0"/>
<path d="M781.2 86.2 l5.6 5.6 M786.8 86.2 l-5.6 5.6" stroke="#555" stroke-width="0.9"/>
<text x="628" y="112" font-size="7.5" fill="#222" text-anchor="start" font-weight="normal" textLength="46" lengthAdjust="spacingAndGlyphs" stroke="#222" stroke-width="0.08" >ラベル オプション</text>
<path d="M629 128 L634.8 122.3 L640.5 128 L634.8 133.7 Z" fill="#fff" stroke="#505050" stroke-width="0.8"/>
<circle cx="633.3" cy="122.2" r="1.1" fill="#9a9a9a"/>
<path d="M634.3 122.5 v2.5" stroke="#505050" stroke-width="0.7"/>
<path d="M638.5 124.2 q3.5 1.5 3.3 6 q-0.2 2.2 -1.2 3 q0.3 -3 -1.8 -6z" fill="#3a3a3a"/>
<path d="M659.3 121.3 L665.2 125.6 L663 132.3 L655.6 132.3 L653.4 125.6 Z" fill="#fff" stroke="#7a7a7a" stroke-width="0.75"/>
<rect x="655.6" y="131.9" width="7.4" height="0.9" fill="#444"/>
<rect x="654.5" y="133" width="9.5" height="1.2" fill="#f4f4f4"/>
<path d="M678.3 122.4 h9.5 M678.3 121.3 v2.2 M687.8 121.3 v2.2 M677.2 125.8 v7.8 M676.2 125.8 h2 M676.2 133.6 h2" fill="none" stroke="#666" stroke-width="0.6"/>
<rect x="679.3" y="125.9" width="8.7" height="7.8" fill="#4a4a4a"/>
<path d="M683.65 127.2 l1.6 2.6 l-1.6 2.6 l-1.6 -2.6z" fill="#bdbdbd"/>
<path d="M680.6 129.8 h6.1" stroke="#bdbdbd" stroke-width="0.5"/>
<rect x="699.8" y="125.9" width="3.1" height="7.95" fill="#1e6b3f"/>
<rect x="703.9" y="121.9" width="3.2" height="11.95" fill="#1e6b3f"/>
<rect x="708" y="123.9" width="3.2" height="9.95" fill="#1e6b3f"/>
<rect x="695" y="118" width="25.8" height="23.8" rx="0.6" fill="none" stroke="#ff0000" stroke-width="2"/>
<circle cx="738.1" cy="127.2" r="6.8" fill="none" stroke="#ff0000" stroke-width="1.1"/>
<text x="738.1" y="131.5" font-size="11.5" fill="#ff0000" text-anchor="middle" font-weight="bold" >1</text>
<line x1="625" y1="145.5" x2="790" y2="145.5" stroke="#c8c8c8" stroke-width="1"/>
<path d="M702.5 146 L705.8 143.6 L709 146 Z" fill="#e8e8e8"/>
<path d="M702.5 145.5 L705.8 143.2 L709 145.5" fill="none" stroke="#d0d0d0" stroke-width="0.7"/>
<path d="M630.5 156 l3.2 -3.2 v3.2z" fill="#444"/>
<text x="638" y="157.5" font-size="7.5" fill="#217346" text-anchor="start" font-weight="normal" textLength="46" lengthAdjust="spacingAndGlyphs" stroke="#217346" stroke-width="0.45" >ラベル オプション</text>
<text x="638" y="170" font-size="7.5" fill="#333" text-anchor="start" font-weight="normal" textLength="37" lengthAdjust="spacingAndGlyphs" stroke="#333" stroke-width="0.08" >ラベルの内容</text>
<rect x="644.5" y="176.5" width="7" height="7" fill="#fff" stroke="#8a8a8a" stroke-width="0.7"/>
<path d="M645.8 180 l1.8 2 l3 -4" fill="none" stroke="#444" stroke-width="0.8"/>
<text x="655" y="182.8" font-size="7.5" fill="#333" text-anchor="start" font-weight="normal" textLength="35" lengthAdjust="spacingAndGlyphs" stroke="#333" stroke-width="0.08" >セルの値(E)</text>
<rect x="644.5" y="191.5" width="7" height="7" fill="#fff" stroke="#8a8a8a" stroke-width="0.7"/>
<text x="655" y="197.8" font-size="7.5" fill="#333" text-anchor="start" font-weight="normal" textLength="32" lengthAdjust="spacingAndGlyphs" stroke="#333" stroke-width="0.08" >系列名(S)</text>
<rect x="644.5" y="206.0" width="7" height="7" fill="#fff" stroke="#8a8a8a" stroke-width="0.7"/>
<text x="655" y="212.3" font-size="7.5" fill="#333" text-anchor="start" font-weight="normal" textLength="24.4" lengthAdjust="spacingAndGlyphs" stroke="#333" stroke-width="0.08" >X 値(X)</text>
<rect x="644.5" y="220.3" width="7" height="7" fill="#fff" stroke="#8a8a8a" stroke-width="0.7"/>
<text x="655" y="226.60000000000002" font-size="7.5" fill="#333" text-anchor="start" font-weight="normal" textLength="24.4" lengthAdjust="spacingAndGlyphs" stroke="#333" stroke-width="0.08" >Y 値(Y)</text>
<rect x="644.5" y="235.0" width="7" height="7" fill="#fff" stroke="#c8c8c8" stroke-width="0.7"/>
<path d="M645.8 238.5 l1.8 2 l3 -4" fill="none" stroke="#b0b0b0" stroke-width="0.8"/>
<text x="655" y="241.3" font-size="7.5" fill="#a0a0a0" text-anchor="start" font-weight="normal" textLength="73" lengthAdjust="spacingAndGlyphs" stroke="#a0a0a0" stroke-width="0.08" >引き出し線を表示する(H)</text>
<rect x="644.5" y="249.5" width="7" height="7" fill="#fff" stroke="#c8c8c8" stroke-width="0.7"/>
<text x="655" y="255.8" font-size="7.5" fill="#a0a0a0" text-anchor="start" font-weight="normal" textLength="46" lengthAdjust="spacingAndGlyphs" stroke="#a0a0a0" stroke-width="0.08" >凡例マーカー(L)</text>
<rect x="637" y="173.5" width="58.5" height="15.5" fill="none" stroke="#ff0000" stroke-width="1.8"/>
<circle cx="711" cy="179.5" r="6.8" fill="none" stroke="#ff0000" stroke-width="1.1"/>
<text x="711" y="183.8" font-size="11.5" fill="#ff0000" text-anchor="middle" font-weight="bold" >2</text>
<text x="645" y="272.3" font-size="7.5" fill="#333" text-anchor="start" font-weight="normal" textLength="44" lengthAdjust="spacingAndGlyphs" stroke="#333" stroke-width="0.08" >区切り文字(E)</text>
<rect x="724.5" y="262.5" width="54" height="12.5" fill="#fff" stroke="#c0c0c0" stroke-width="0.7"/>
<text x="729" y="271.5" font-size="7.5" fill="#222" text-anchor="start" font-weight="normal" stroke="#222" stroke-width="0.08" >,</text>
<path d="M770.5 267.5 h4 l-2 2.5z" fill="#444"/>
<rect x="644.5" y="279.5" width="85" height="14" fill="#fff" stroke="#c0c0c0" stroke-width="0.7"/>
<text x="650" y="289.3" font-size="7.5" fill="#222" text-anchor="start" font-weight="normal" textLength="74" lengthAdjust="spacingAndGlyphs" stroke="#222" stroke-width="0.08" >ラベル テキストのリセット(R)</text>
<text x="638" y="304.8" font-size="7.5" fill="#333" text-anchor="start" font-weight="normal" textLength="37" lengthAdjust="spacingAndGlyphs" stroke="#333" stroke-width="0.08" >ラベルの位置</text>
<circle cx="648.2" cy="318.7" r="3.2" fill="#fff" stroke="#a0a0a0" stroke-width="0.7"/>
<text x="654.5" y="321.5" font-size="7.5" fill="#333" text-anchor="start" font-weight="normal" textLength="24" lengthAdjust="spacingAndGlyphs" stroke="#333" stroke-width="0.08" >中央(C)</text>
<circle cx="648.2" cy="332.2" r="3.2" fill="#fff" stroke="#a0a0a0" stroke-width="0.7"/>
<text x="654.5" y="335.0" font-size="7.5" fill="#333" text-anchor="start" font-weight="normal" textLength="17.5" lengthAdjust="spacingAndGlyphs" stroke="#333" stroke-width="0.08" >左(E)</text>
<circle cx="648.2" cy="345.5" r="3.2" fill="#fff" stroke="#a0a0a0" stroke-width="0.7"/>
<text x="654.5" y="348.3" font-size="7.5" fill="#333" text-anchor="start" font-weight="normal" textLength="17.5" lengthAdjust="spacingAndGlyphs" stroke="#333" stroke-width="0.08" >右(R)</text>
<circle cx="648.2" cy="358.8" r="3.2" fill="#fff" stroke="#a0a0a0" stroke-width="0.7"/>
<circle cx="648.2" cy="358.8" r="1.4" fill="#333"/>
<text x="654.5" y="361.6" font-size="7.5" fill="#333" text-anchor="start" font-weight="normal" textLength="17.5" lengthAdjust="spacingAndGlyphs" stroke="#333" stroke-width="0.08" >上(O)</text>
<circle cx="648.2" cy="372.5" r="3.2" fill="#fff" stroke="#a0a0a0" stroke-width="0.7"/>
<text x="654.5" y="375.3" font-size="7.5" fill="#333" text-anchor="start" font-weight="normal" textLength="20" lengthAdjust="spacingAndGlyphs" stroke="#333" stroke-width="0.08" >下(W)</text>
<path d="M631.5 389.5 l3 3 l-3 3z" fill="none" stroke="#777" stroke-width="0.6"/>
<text x="638.7" y="395.3" font-size="7.5" fill="#333" text-anchor="start" font-weight="normal" textLength="28" lengthAdjust="spacingAndGlyphs" stroke="#333" stroke-width="0.2" >表示形式</text>
<rect x="797" y="425.5" width="1.2" height="11" fill="#666"/>
<rect x="2" y="419.5" width="603" height="17" fill="#e6e6e6"/>
<rect x="2" y="419.3" width="603" height="1.4" fill="#cfcfcf"/>
<path d="M19.5 425 l-2 2.5 l2 2.5" fill="none" stroke="#c0c0c0" stroke-width="0.6"/>
<path d="M34 425 l2 2.5 l-2 2.5" fill="none" stroke="#c0c0c0" stroke-width="0.6"/>
<rect x="60.5" y="419.5" width="42.5" height="14" fill="#fff"/>
<line x1="60.5" y1="419.5" x2="60.5" y2="434" stroke="#c8c8c8" stroke-width="1"/>
<rect x="60" y="432.5" width="43" height="1.5" fill="#217346"/>
<line x1="103.5" y1="420" x2="103.5" y2="434" stroke="#c8c8c8" stroke-width="1"/>
<text x="81.5" y="430.8" font-size="8.3" fill="#217346" text-anchor="middle" font-weight="normal" textLength="26" lengthAdjust="spacingAndGlyphs" stroke="#217346" stroke-width="0.08" >Sheet1</text>
<text x="124" y="430.8" font-size="8.3" fill="#444" text-anchor="middle" font-weight="normal" textLength="26" lengthAdjust="spacingAndGlyphs" >Sheet2</text>
<line x1="145.5" y1="422" x2="145.5" y2="434" stroke="#b0b0b0" stroke-width="0.8"/>
<text x="166" y="430.8" font-size="8.3" fill="#444" text-anchor="middle" font-weight="normal" textLength="26" lengthAdjust="spacingAndGlyphs" >Sheet3</text>
<line x1="187.5" y1="422" x2="187.5" y2="434" stroke="#b0b0b0" stroke-width="0.8"/>
<circle cx="211.5" cy="428" r="4" fill="none" stroke="#666" stroke-width="0.8"/>
<path d="M209.3 428 h4.4 M211.5 425.8 v4.4" stroke="#666" stroke-width="0.9"/>
<rect x="371.5" y="425" width="0.8" height="0.8" fill="#999"/>
<rect x="371.5" y="427.5" width="0.8" height="0.8" fill="#999"/>
<rect x="371.5" y="430" width="0.8" height="0.8" fill="#999"/>
<rect x="381" y="424.3" width="8" height="7.7" fill="#fff" stroke="#bdbdbd" stroke-width="0.6"/>
<path d="M386.5 426 v4.3 l-2.3 -2.15z" fill="#444"/>
<rect x="389" y="424.3" width="189.5" height="7.7" fill="#fff" stroke="#c8c8c8" stroke-width="0.6"/>
<rect x="578.5" y="424.3" width="19" height="7.7" fill="#dcdcdc"/>
<rect x="598" y="424.3" width="7.7" height="7.7" fill="#fff" stroke="#bdbdbd" stroke-width="0.6"/>
<path d="M600.5 426 v4.3 l2.3 -2.15z" fill="#444"/>
<rect x="2" y="436.5" width="796" height="11.5" fill="#eeeeee"/>
<line x1="2" y1="436.75" x2="798" y2="436.75" stroke="#d0d0d0" stroke-width="0.5"/>
<rect x="2" y="448" width="28" height="1" fill="#6e6e6e"/>
<rect x="30" y="448" width="200" height="1" fill="#d8d8d8"/>
<rect x="230" y="448" width="568" height="1" fill="#6e6e6e"/>
<text x="7" y="445" font-size="7" fill="#555" text-anchor="start" font-weight="normal" textLength="13.5" lengthAdjust="spacingAndGlyphs" >参照</text>
<rect x="46.5" y="440.5" width="6" height="5.5" fill="none" stroke="#444" stroke-width="0.8"/>
<rect x="45.5" y="439" width="2" height="2" fill="#444"/>
<rect x="635" y="438.5" width="8" height="7.5" fill="none" stroke="#666" stroke-width="0.7"/>
<path d="M635 441 h8 M635 443.5 h8 M637.7 438.5 v7.5 M640.3 438.5 v7.5" stroke="#666" stroke-width="0.5"/>
<rect x="657.5" y="438.5" width="8" height="7.5" fill="none" stroke="#666" stroke-width="0.7"/>
<rect x="659" y="440" width="5" height="4.5" fill="#999"/>
<rect x="679.5" y="438.5" width="8" height="7.5" fill="none" stroke="#666" stroke-width="0.7"/>
<path d="M681.5 438.5 v3 h4 v-3" fill="none" stroke="#666" stroke-width="0.6"/>
<rect x="697.5" y="441.7" width="3.5" height="0.9" fill="#333"/>
<line x1="703" y1="442.5" x2="761" y2="442.5" stroke="#b0b0b0" stroke-width="0.6"/>
<rect x="732" y="440.5" width="0.8" height="4" fill="#999"/>
<path d="M763 442.2 h4.4 M765.2 440 v4.4" stroke="#333" stroke-width="0.9"/>
<text x="783" y="445" font-size="7" fill="#a0a0a0" text-anchor="middle" font-weight="normal" >100%</text>
</svg></body></html>
